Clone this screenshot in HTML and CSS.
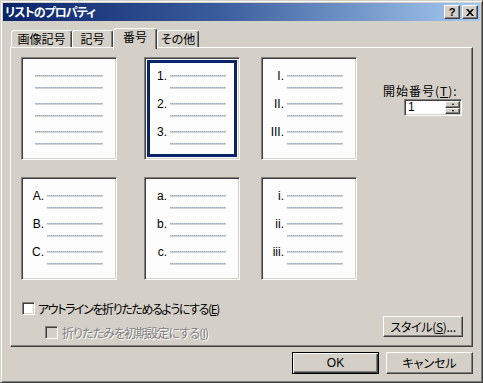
FILE: index.html
```html
<!DOCTYPE html>
<html lang="ja">
<head>
<meta charset="utf-8">
<title>リストのプロパティ</title>
<link rel="stylesheet" href="styles.css">
</head>
<body>
<div class="window">
  <div class="titlebar">
    <span class="title">リストのプロパティ</span>
    <div class="tb-btns">
      <div class="tb-btn help">?</div>
      <div class="tb-btn">
        <svg width="8" height="7" viewBox="0 0 8 7"><path d="M0 0h2l2 2.2L6 0h2L5 3.5 8 7H6L4 4.8 2 7H0l3-3.5z" fill="#000"/></svg>
      </div>
    </div>
  </div>
  <div class="client">
    <div class="tabs">
      <div class="tab t1">画像記号</div>
      <div class="tab t2">記号</div>
      <div class="tab t3 active">番号</div>
      <div class="tab t4">その他</div>
    </div>
    <div class="panel">
      <div class="panel-top">
        <div class="gallery">
          <div class="card plain">
            <div class="item"><div class="lines"><i class="line"></i><i class="line"></i></div></div>
            <div class="item"><div class="lines"><i class="line"></i><i class="line"></i></div></div>
            <div class="item"><div class="lines"><i class="line"></i><i class="line"></i></div></div>
          </div>
          <div class="card selected">
            <div class="item"><span class="num">1.</span><div class="lines"><i class="line"></i><i class="line"></i></div></div>
            <div class="item"><span class="num">2.</span><div class="lines"><i class="line"></i><i class="line"></i></div></div>
            <div class="item"><span class="num">3.</span><div class="lines"><i class="line"></i><i class="line"></i></div></div>
          </div>
          <div class="card">
            <div class="item"><span class="num">I.</span><div class="lines"><i class="line"></i><i class="line"></i></div></div>
            <div class="item"><span class="num">II.</span><div class="lines"><i class="line"></i><i class="line"></i></div></div>
            <div class="item"><span class="num">III.</span><div class="lines"><i class="line"></i><i class="line"></i></div></div>
          </div>
          <div class="card">
            <div class="item"><span class="num">A.</span><div class="lines"><i class="line"></i><i class="line"></i></div></div>
            <div class="item"><span class="num">B.</span><div class="lines"><i class="line"></i><i class="line"></i></div></div>
            <div class="item"><span class="num">C.</span><div class="lines"><i class="line"></i><i class="line"></i></div></div>
          </div>
          <div class="card">
            <div class="item"><span class="num">a.</span><div class="lines"><i class="line"></i><i class="line"></i></div></div>
            <div class="item"><span class="num">b.</span><div class="lines"><i class="line"></i><i class="line"></i></div></div>
            <div class="item"><span class="num">c.</span><div class="lines"><i class="line"></i><i class="line"></i></div></div>
          </div>
          <div class="card">
            <div class="item"><span class="num">i.</span><div class="lines"><i class="line"></i><i class="line"></i></div></div>
            <div class="item"><span class="num">ii.</span><div class="lines"><i class="line"></i><i class="line"></i></div></div>
            <div class="item"><span class="num">iii.</span><div class="lines"><i class="line"></i><i class="line"></i></div></div>
          </div>
        </div>
        <div class="start">
          <div class="start-label">開始番号(<u>T</u>):</div>
          <div class="spin">
            <span class="spin-val">1</span>
            <div class="spin-btns">
              <span class="sb"><i class="arr up"></i></span>
              <span class="sb"><i class="arr down"></i></span>
            </div>
          </div>
        </div>
      </div>
      <div class="panel-bottom">
        <div class="checks">
          <div class="check"><span class="box"></span><span class="ctext c1">アウトラインを折りたためるようにする(<u>E</u>)</span></div>
          <div class="check sub disabled"><span class="box"></span><span class="ctext c2">折りたたみを初期設定にする(<u>I</u>)</span></div>
        </div>
        <div class="btn style-btn">スタイル(<u>S</u>)...</div>
      </div>
    </div>
    <div class="actions">
      <div class="btn default">OK</div>
      <div class="btn">キャンセル</div>
    </div>
  </div>
</div>
</body>
</html>
```
FILE: styles.css
```css
body {
  margin: 0;
  background: #d4d0c8;
  font-family: "Noto Sans CJK JP", "Noto Sans", sans-serif;
  font-size: 12px;
  font-feature-settings: "palt" 1;
  color: #000;
}

.window {
  width: 483px;
  height: 383px;
  box-sizing: border-box;
  background: #d4d0c8;
  border: 1px solid;
  border-color: #d4d0c8 #404040 #404040 #d4d0c8;
  box-shadow: inset 1px 1px #fff, inset -1px -1px #808080;
  padding: 2px;
  display: flex;
  flex-direction: column;
}

.titlebar {
  height: 18px;
  display: flex;
  align-items: center;
  justify-content: space-between;
  background: linear-gradient(90deg, #0a246a 0%, #3a5c9c 45%, #a6caf0 100%);
  padding: 0 2px 0 2px;
  flex: none;
}

.title {
  color: #fff;
  font-weight: bold;
  line-height: 14px;
  font-size: 12px;
  letter-spacing: -1px;
}

.tb-btns {
  display: flex;
  gap: 2px;
}

.tb-btn {
  width: 16px;
  height: 14px;
  box-sizing: border-box;
  border: 1px solid;
  border-color: #fff #404040 #404040 #fff;
  box-shadow: inset -1px -1px #808080;
  background: #d4d0c8;
  display: flex;
  align-items: center;
  justify-content: center;
}

.help {
  font-family: "Liberation Sans", sans-serif;
  font-weight: bold;
  font-size: 11px;
  line-height: 12px;
}

.client {
  flex: 1;
  display: flex;
  flex-direction: column;
  padding: 7px 7px 0 7px;
}

.tabs {
  display: flex;
  align-items: flex-end;
  height: 19px;
  margin-left: 1px;
  position: relative;
  z-index: 1;
}

.tab {
  height: 17px;
  box-sizing: border-box;
  border: 1px solid;
  border-bottom: none;
  border-color: #fff #404040 transparent #fff;
  box-shadow: inset -1px 0 #808080;
  border-radius: 3px 3px 0 0;
  background: #d4d0c8;
  line-height: 15px;
  text-align: center;
  flex: none;
}

.t1 { width: 61px; }
.t2 { width: 41px; }
.t3 { width: 44px; }
.t4 { width: 42px; }

.tab.active {
  height: 21px;
  margin-bottom: -2px;
  line-height: 16px;
}

.panel {
  height: 300px;
  box-sizing: border-box;
  border: 1px solid;
  border-color: #fff #404040 #404040 #fff;
  box-shadow: inset -1px -1px #808080;
  padding: 9px 9px 0 10px;
  display: flex;
  flex-direction: column;
  flex: none;
}

.panel-top {
  display: flex;
}

.gallery {
  display: grid;
  grid-template-columns: 123px 117px 96px;
  grid-template-rows: 103px 103px;
  row-gap: 17px;
}

.card {
  width: 96px;
  height: 103px;
  box-sizing: border-box;
  background: #fcfdfc;
  border: 1px solid;
  border-color: #808080 #fff #fff #808080;
  box-shadow: inset 1px 1px #404040, inset -1px -1px #d4d0c8;
  padding-top: 17px;
  display: flex;
  flex-direction: column;
  gap: 14px;
}

.card.selected {
  box-shadow: inset 1px 1px #404040, inset -1px -1px #d4d0c8, inset 0 0 0 2px #fff, inset 0 0 0 5px #0a246a;
}

.item {
  display: flex;
  align-items: flex-start;
  height: 14px;
}

.num {
  width: 22px;
  text-align: right;
  font-family: "Liberation Sans", sans-serif;
  font-size: 12px;
  line-height: 14px;
  margin-top: -6px;
  flex: none;
}

.lines {
  width: 56px;
  margin-left: 3px;
  display: flex;
  flex-direction: column;
  gap: 10px;
}

.plain .lines {
  width: 68px;
  margin-left: 13px;
}

.line {
  display: block;
  height: 2px;
  background:
    repeating-linear-gradient(90deg, #98acd4 0 1px, #c2c4c8 1px 2px) top / 100% 1px no-repeat,
    #d4d4d4;
}

.start {
  margin-left: 26px;
  padding-top: 27px;
}

.start-label {
  line-height: 14px;
  white-space: nowrap;
  letter-spacing: 1px;
}

.spin {
  margin-left: 21px;
  margin-top: 1px;
  width: 58px;
  height: 17px;
  box-sizing: border-box;
  border: 1px solid;
  border-color: #808080 #fff #fff #808080;
  box-shadow: inset 1px 1px #404040, inset -1px -1px #d4d0c8;
  background: #fff;
  padding: 1px 1px 1px 2px;
  display: flex;
}

.spin-val {
  flex: 1;
  font-family: "Liberation Sans", sans-serif;
  font-size: 12px;
  line-height: 13px;
  padding-left: 1px;
}

.spin-btns {
  width: 15px;
  display: flex;
  flex-direction: column;
}

.sb {
  flex: 1;
  box-sizing: border-box;
  border: 1px solid;
  border-color: #fff #404040 #404040 #fff;
  box-shadow: inset -1px -1px #808080;
  background: #d4d0c8;
  display: flex;
  align-items: center;
  justify-content: center;
}

.arr {
  width: 0;
  height: 0;
  border-left: 1.5px solid transparent;
  border-right: 1.5px solid transparent;
}

.arr.up { border-bottom: 2px solid #000; }
.arr.down { border-top: 2px solid #000; }

.panel-bottom {
  margin-top: 22px;
  display: flex;
  justify-content: space-between;
  align-items: flex-start;
}

.checks {
  display: flex;
  flex-direction: column;
  gap: 11px;
}

.check {
  display: flex;
  align-items: center;
  height: 13px;
  margin-left: 1px;
  gap: 3px;
  white-space: nowrap;
}

.ctext {
  line-height: 13px;
}

.c1 { letter-spacing: -1.4px; }
.c2 { letter-spacing: -0.9px; }

.check.sub {
  margin-left: 24px;
  gap: 4px;
}

.box {
  width: 13px;
  height: 13px;
  box-sizing: border-box;
  border: 1px solid;
  border-color: #808080 #fff #fff #808080;
  box-shadow: inset 1px 1px #404040, inset -1px -1px #d4d0c8;
  background: #fff;
  flex: none;
}

.disabled .box {
  background: #d4d0c8;
}

.disabled .ctext {
  color: #808080;
  text-shadow: 1px 1px #fff;
}

.btn {
  box-sizing: border-box;
  border: 1px solid;
  border-color: #fff #404040 #404040 #fff;
  box-shadow: inset -1px -1px #808080;
  background: #d4d0c8;
  display: flex;
  align-items: center;
  justify-content: center;
  white-space: nowrap;
  line-height: 14px;
}

.style-btn {
  width: 80px;
  height: 21px;
  margin-top: 14px;
  letter-spacing: -0.3px;
}

.actions {
  margin-top: 5px;
  display: flex;
  justify-content: flex-end;
  gap: 7px;
}

.actions .btn {
  width: 87px;
  height: 22px;
}

.btn.default {
  border-color: #000;
  box-shadow: inset 1px 1px #fff, inset -1px -1px #404040, inset -2px -2px #808080;
  font-family: "Liberation Sans", sans-serif;
}
```
